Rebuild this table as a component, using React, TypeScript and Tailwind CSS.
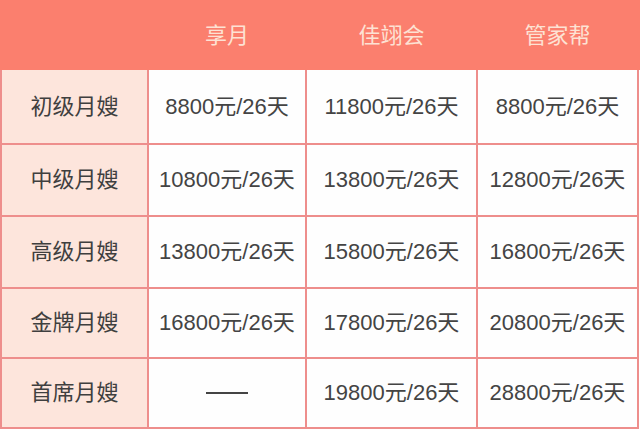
import React from "react";

const cols = "grid grid-cols-[145px_156px_169px_159px] gap-x-[2px]";

const rows: [string, string, string, string][] = [
  ["初级月嫂", "8800元/26天", "11800元/26天", "8800元/26天"],
  ["中级月嫂", "10800元/26天", "13800元/26天", "12800元/26天"],
  ["高级月嫂", "13800元/26天", "15800元/26天", "16800元/26天"],
  ["金牌月嫂", "16800元/26天", "17800元/26天", "20800元/26天"],
  ["首席月嫂", "—", "19800元/26天", "28800元/26天"],
];

export default function App() {
  return (
    <div
      className="w-[640px] h-[430px] overflow-hidden bg-white text-[22px] leading-none"
      style={{ fontFamily: '"Liberation Sans", "Noto Sans CJK SC", sans-serif' }}
    >
      <div className={`${cols} h-[70px] bg-[#fb7f6e] pl-[2px] text-[#fde2d4]`}>
        <div />
        <div className="flex items-center justify-center pt-[1px]">享月</div>
        <div className="flex items-center justify-center pt-[1px]">佳翊会</div>
        <div className="flex items-center justify-center pt-[1px]">管家帮</div>
      </div>
      <div className="w-[639px] bg-[#ee8e8c] pl-[2px] pr-[2px] pb-[2px]">
        <div className={`${cols} grid-rows-[73px_70px_70px_68px_68px] gap-y-[2px]`}>
          {rows.map((r, i) => (
            <React.Fragment key={i}>
              <div className="flex items-center justify-center bg-[#fde5dc] text-[#3f3f3f]">{r[0]}</div>
              {r.slice(1).map((c, j) => (
                <div key={j} className="flex items-center justify-center bg-[#fefefe] text-[#444]">
                  {c === "—" ? <span className="block w-[42px] h-[2px] bg-[#444]" /> : c}
                </div>
              ))}
            </React.Fragment>
          ))}
        </div>
      </div>
    </div>
  );
}
